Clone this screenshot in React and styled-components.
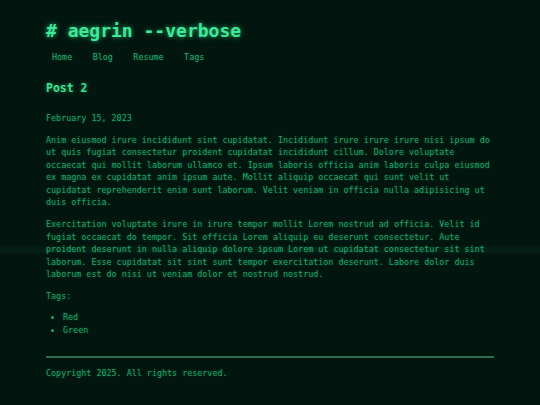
import React from 'react'
import styled, { createGlobalStyle } from 'styled-components'

const GlobalStyle = createGlobalStyle`
  html, body {
    margin: 0;
    padding: 0;
    background: #02150f;
  }
  body {
    font-family: 'DejaVu Sans Mono', 'Liberation Mono', monospace;
    color: #22a468;
  }
`

const Page = styled.div`
  position: relative;
  min-height: 405px;
  background: #02150f;
  overflow: hidden;
`

const ScanBand = styled.div`
  position: absolute;
  left: 0;
  right: 0;
  top: 245px;
  height: 10px;
  pointer-events: none;
  background: linear-gradient(
    to bottom,
    rgba(60, 255, 160, 0) 0%,
    rgba(60, 255, 160, 0.04) 35%,
    rgba(60, 255, 160, 0.055) 55%,
    rgba(60, 255, 160, 0) 100%
  );
`

const Wrapper = styled.div`
  width: 448px;
  margin: 0 auto;
  padding-top: 20px;
  display: flex;
  flex-direction: column;
  font-size: 8.4px;
  line-height: 12.5px;
`

const SiteTitle = styled.h1`
  margin: 0;
  font-size: 18px;
  line-height: 22px;
  font-weight: 700;
  color: #3fe898;
  text-shadow: 0 0 4px rgba(60, 240, 150, 0.55), 0 0 9px rgba(60, 240, 150, 0.25);
`

const Nav = styled.nav`
  display: flex;
  gap: 8.5px;
  margin-top: 9px;
`

const NavLink = styled.a`
  padding: 0 6px;
  color: #27a86d;
  text-decoration: none;
  text-shadow: 0 0 3px rgba(40, 200, 120, 0.35);
`

const PostTitle = styled.h2`
  margin: 17px 0 0;
  font-size: 11.5px;
  line-height: 14px;
  font-weight: 700;
  color: #3be293;
  text-shadow: 0 0 4px rgba(60, 240, 150, 0.45);
`

const Text = styled.p`
  margin: ${(p) => p.$top || '9.5px'} 0 0;
  color: #22a468;
  text-shadow: 0 0 3px rgba(40, 200, 120, 0.35);
`

const TagList = styled.ul`
  margin: 8.5px 0 0;
  padding-left: 17px;
  list-style: disc;
`

const TagItem = styled.li`
  line-height: 13px;
  color: #22a468;
  text-shadow: 0 0 3px rgba(40, 200, 120, 0.35);
`

const Rule = styled.hr`
  margin: 19px 0 0;
  border: none;
  height: 2px;
  background: #2d6c4c;
`

const Footer = styled.footer`
  margin-top: 9px;
  color: #22a468;
  text-shadow: 0 0 3px rgba(40, 200, 120, 0.35);
`

const links = ['Home', 'Blog', 'Resume', 'Tags']
const tags = ['Red', 'Green']

export default function App() {
  return (
    <Page>
      <GlobalStyle />
      <Wrapper>
        <SiteTitle># aegrin --verbose</SiteTitle>
        <Nav>
          {links.map((l) => (
            <NavLink key={l} href="#">
              {l}
            </NavLink>
          ))}
        </Nav>
        <PostTitle>Post 2</PostTitle>
        <Text $top="17px">February 15, 2023</Text>
        <Text>
          Anim eiusmod irure incididunt sint cupidatat. Incididunt irure irure irure nisi ipsum do
          ut quis fugiat consectetur proident cupidatat incididunt cillum. Dolore voluptate
          occaecat qui mollit laborum ullamco et. Ipsum laboris officia anim laboris culpa eiusmod
          ex magna ex cupidatat anim ipsum aute. Mollit aliquip occaecat qui sunt velit ut
          cupidatat reprehenderit enim sunt laborum. Velit veniam in officia nulla adipisicing ut
          duis officia.
        </Text>
        <Text>
          Exercitation voluptate irure in irure tempor mollit Lorem nostrud ad officia. Velit id
          fugiat occaecat do tempor. Sit officia Lorem aliquip eu deserunt consectetur. Aute
          proident deserunt in nulla aliquip dolore ipsum Lorem ut cupidatat consectetur sit sint
          laborum. Esse cupidatat sit sint sunt tempor exercitation deserunt. Labore dolor duis
          laborum est do nisi ut veniam dolor et nostrud nostrud.
        </Text>
        <Text>Tags:</Text>
        <TagList>
          {tags.map((t) => (
            <TagItem key={t}>{t}</TagItem>
          ))}
        </TagList>
        <Rule />
        <Footer>Copyright 2025. All rights reserved.</Footer>
      </Wrapper>
      <ScanBand />
    </Page>
  )
}
